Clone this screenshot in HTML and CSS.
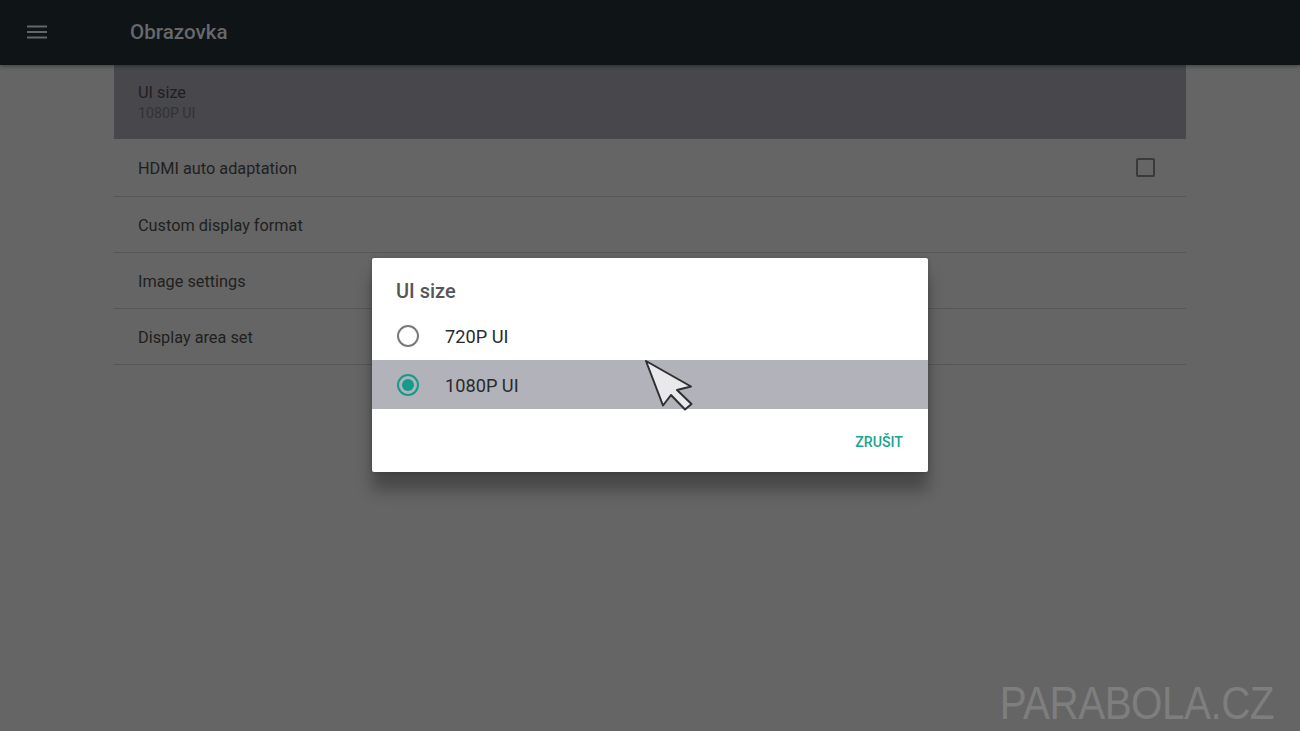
FILE: index.html
```html
<!DOCTYPE html>
<html lang="en">
<head>
  <meta charset="UTF-8">
  <title>Obrazovka</title>
  <link rel="stylesheet" href="styles.css">
</head>
<body>
  <!-- Header -->
  <header class="topbar">
    <svg class="menu-icon" width="20" height="14" viewBox="0 0 20 14">
      <path d="M0 1.5h20M0 7h20M0 12.5h20" stroke="#64676a" stroke-width="2" fill="none"/>
    </svg>
    <h1 class="topbar-title">Obrazovka</h1>
  </header>

  <!-- Settings list -->
  <main class="settings">
    <div class="row row-selected">
      <div class="row-title">UI size</div>
      <div class="row-sub">1080P UI</div>
    </div>
    <div class="row row-check">
      <div class="row-title">HDMI auto adaptation</div>
      <span class="checkbox"></span>
    </div>
    <div class="row"><div class="row-title">Custom display format</div></div>
    <div class="row"><div class="row-title">Image settings</div></div>
    <div class="row"><div class="row-title">Display area set</div></div>
  </main>

  <!-- Dialog -->
  <div class="dialog">
    <h3 class="dialog-title">UI size</h3>
    <div class="option">
      <span class="radio"></span>
      <span class="option-label">720P UI</span>
    </div>
    <div class="option option-active">
      <span class="radio radio-on"></span>
      <span class="option-label">1080P UI</span>
    </div>
    <div class="dialog-actions">
      <span class="cancel">ZRUŠIT</span>
    </div>
  </div>

  <svg class="cursor" width="50" height="52" viewBox="0 0 50 52">
    <path d="M2 2L47 27.500L33 31L47.500 45L41 50.500L27 36L19 46.500Z" fill="#e9e9ec" stroke="#2e2f33" stroke-width="2" stroke-linejoin="round"/>
  </svg>

  <div class="watermark">PARABOLA.CZ</div>
</body>
</html>
```

FILE: styles.css
```css
html, body {
  height: 100%;
}
body {
  margin: 0;
  font-family: Roboto, "Liberation Sans", sans-serif;
  background-color: #656565;
  overflow: hidden;
  position: relative;
}

.topbar {
  height: 65px;
  display: flex;
  align-items: center;
  background-color: #0f1417;
  box-shadow: 0 1px 4px rgba(0, 0, 0, 0.4);
  position: relative;
}
.menu-icon {
  margin-left: 27px;
  margin-top: -2px;
}
.topbar-title {
  margin: -2px 0 0 83px;
  font-size: 20.6px;
  font-weight: 500;
  color: #66696b;
}

.settings {
  margin: 0 114px;
}
.row {
  height: 54px;
  padding: 1px 24px 0;
  display: flex;
  flex-direction: column;
  justify-content: center;
  border-bottom: 1px solid #575757;
}
.row-title {
  font-size: 16.3px;
  color: #1f1f1f;
}
.row-sub {
  font-size: 14.2px;
  color: #333334;
  margin-top: 3px;
}
.row-selected {
  height: 74px;
  padding-top: 0;
  background-color: #47474c;
  border-bottom: none;
}
.row-check {
  height: 56px;
  flex-direction: row;
  justify-content: space-between;
  align-items: center;
}
.checkbox {
  width: 15px;
  height: 15px;
  margin-right: 7px;
  margin-top: -1px;
  border: 2px solid #3a3a3a;
  border-radius: 2px;
}

.dialog {
  position: absolute;
  left: 372px;
  top: 258px;
  width: 556px;
  height: 214px;
  background-color: #fff;
  border-radius: 2px;
  box-shadow: 0 18px 16px rgba(0, 0, 0, 0.3), 0 0 5px rgba(0, 0, 0, 0.2);
}
.dialog-title {
  margin: 0;
  padding: 20px 24px 0;
  height: 33px;
  font-size: 20px;
  line-height: 26px;
  font-weight: 500;
  color: #565656;
}
.option {
  height: 49px;
  padding: 0 25px;
  display: flex;
  align-items: center;
  gap: 26px;
  font-size: 18.2px;
  color: #2a2a2a;
}
.option-label {
  padding-top: 2px;
}
.option-active {
  background-color: #b2b2ba;
}
.radio {
  width: 18px;
  height: 18px;
  border: 2px solid #7a7a7a;
  border-radius: 50%;
  position: relative;
}
.radio-on {
  border-color: #139c8a;
}
.radio-on::after {
  content: "";
  position: absolute;
  left: 3px;
  top: 3px;
  width: 12px;
  height: 12px;
  border-radius: 50%;
  background-color: #139c8a;
}
.dialog-actions {
  display: flex;
  justify-content: flex-end;
  padding: 25px 25px 0;
}
.cancel {
  font-size: 14.2px;
  font-weight: 500;
  color: #1aa48f;
  line-height: 17px;
}

.cursor {
  position: absolute;
  left: 644px;
  top: 359px;
}

.watermark {
  position: absolute;
  right: 26px;
  bottom: 1px;
  font-family: "Liberation Sans", Arial, sans-serif;
  font-size: 47px;
  letter-spacing: -0.6px;
  color: #7e7e7e;
  transform: scaleX(0.86);
  transform-origin: right center;
}
```
